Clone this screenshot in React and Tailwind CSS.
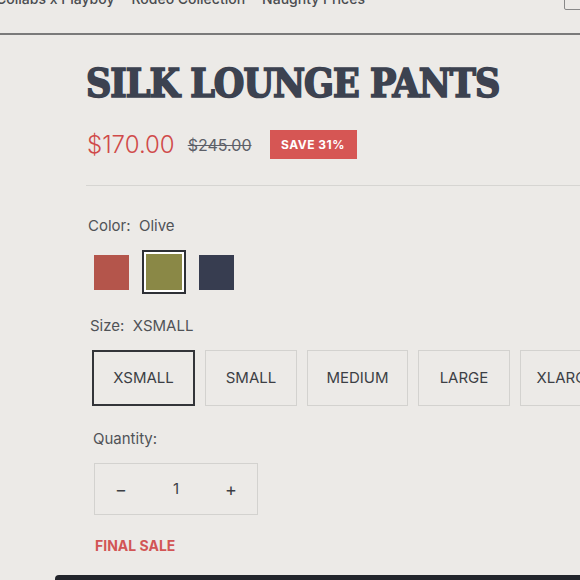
import React, { useState } from 'react';

const colors = [
  { name: 'Rust', cls: 'bg-[#b4554b]' },
  { name: 'Olive', cls: 'bg-[#8a8846]' },
  { name: 'Navy', cls: 'bg-[#373d50]' },
];

const sizes = [
  { label: 'XSMALL', w: 'w-[103px]' },
  { label: 'SMALL', w: 'w-[92px]' },
  { label: 'MEDIUM', w: 'w-[101px]' },
  { label: 'LARGE', w: 'w-[92px]' },
  { label: 'XLARGE', w: 'w-[92px]' },
];

export default function App() {
  const [color, setColor] = useState('Olive');
  const [size, setSize] = useState('XSMALL');
  const [qty, setQty] = useState(1);

  return (
    <div className="w-[580px] h-[580px] overflow-hidden bg-[#eceae7] text-[#505357]" style={{ fontFamily: 'Inter, "Noto Sans", sans-serif' }}>
      {/* nav */}
      <div className="h-[35px] flex items-start border-b-2 border-[#7a7a7a] relative">
        <div className="flex gap-[17px] -mt-[12px] -ml-[4px] text-[14px] font-medium text-[#4a4c50] whitespace-nowrap">
          <span>Collabs x Playboy</span>
          <span>Rodeo Collection</span>
          <span>Naughty Prices</span>
        </div>
        <div className="absolute right-[-6px] top-[-6px] w-[22px] h-[16px] border border-[#888] rounded-[2px]" />
      </div>

      <div className="pl-[86px]">
        <h1
          className="mt-[28px] text-[39px] leading-[40px] text-[#3c4250] tracking-[-1px] whitespace-nowrap [-webkit-text-stroke:1.6px_#3c4250]"
          style={{ fontFamily: '"DejaVu Serif", serif', fontWeight: 700, fontStretch: 'condensed' }}
        >
          SILK LOUNGE PANTS
        </h1>

        <div className="mt-[27px] flex items-center">
          <span className="ml-[1px] text-[24px] leading-none font-light text-[#d04a4a]">$170.00</span>
          <span className="ml-[13px] text-[16px] leading-none text-[#5d6068] line-through">$245.00</span>
          <span className="ml-[18px] h-[29px] w-[87px] flex items-center justify-center bg-[#d65654] text-white text-[12px] font-bold tracking-[0.5px]">
            SAVE 31%
          </span>
        </div>

        <div className="mt-[26px] border-t border-[#d6d5d2]" />

        <div className="mt-[32px] ml-[2px] text-[15px] leading-none">
          Color:&nbsp; {color}
        </div>

        <div className="mt-[17px] ml-[8px] flex items-center gap-[13px]">
          {colors.map((c) =>
            c.name === color ? (
              <button key={c.name} className="w-[44px] h-[44px] border-2 border-[#2e3036] p-[2px] bg-white">
                <span className={`block w-full h-full ${c.cls}`} />
              </button>
            ) : (
              <button key={c.name} onClick={() => setColor(c.name)} className={`w-[35px] h-[35px] ${c.cls}`} />
            )
          )}
        </div>

        <div className="mt-[24px] ml-[4px] text-[15px] leading-none">
          Size:&nbsp; {size}
        </div>

        <div className="mt-[17px] ml-[6px] flex gap-[10px]">
          {sizes.map((s) => (
            <button
              key={s.label}
              onClick={() => setSize(s.label)}
              className={`${s.w} h-[56px] shrink-0 flex items-center justify-center text-[15px] text-[#3c3f45] ${
                size === s.label ? 'border-2 border-[#333539]' : 'border border-[#d3d2cf]'
              }`}
            >
              {s.label}
            </button>
          ))}
        </div>

        <div className="mt-[25px] ml-[7px] text-[15px] leading-none">Quantity:</div>

        <div className="mt-[17px] ml-[8px] w-[164px] h-[52px] border border-[#d3d2cf] flex items-center justify-between px-[20px] text-[#3c3f45]">
          <button onClick={() => setQty(Math.max(1, qty - 1))} className="text-[18px]">−</button>
          <span className="text-[15px]">{qty}</span>
          <button onClick={() => setQty(qty + 1)} className="text-[18px]">+</button>
        </div>

        <div className="mt-[20px] ml-[9px] text-[14px] font-bold text-[#d25555]">FINAL SALE</div>

        <div className="mt-[19px] -ml-[31px] h-[40px] bg-[#22252b] rounded-tl-[4px]" />
      </div>
    </div>
  );
}
